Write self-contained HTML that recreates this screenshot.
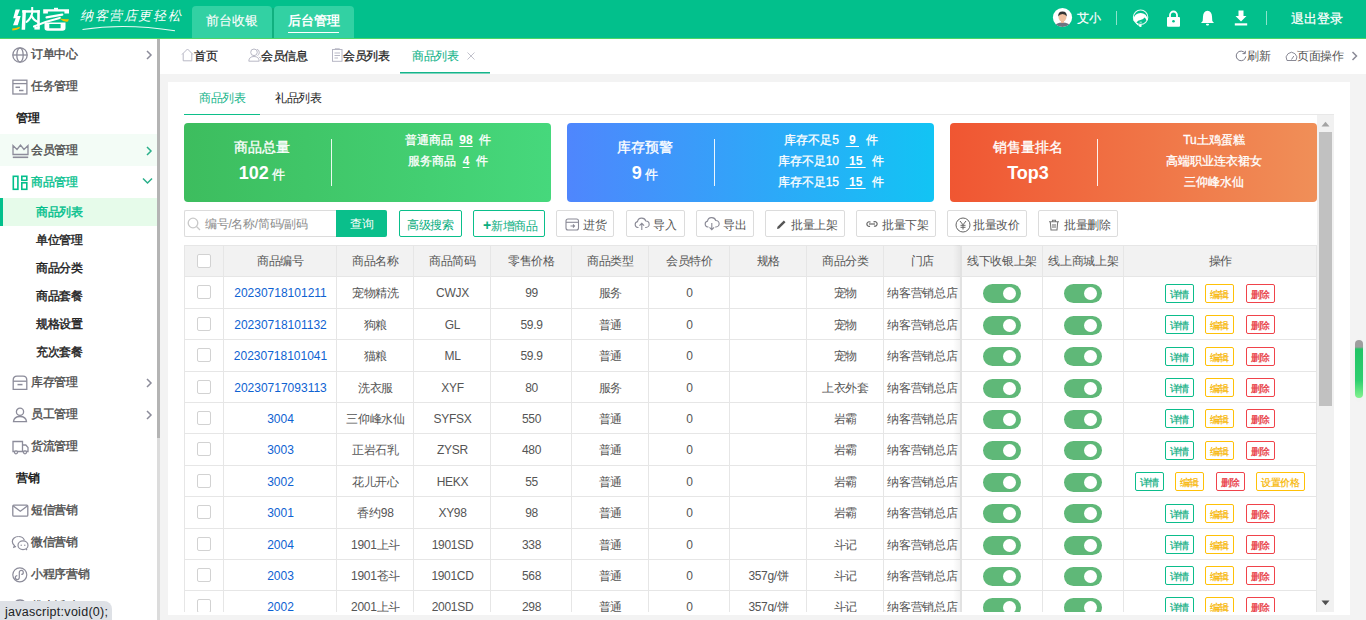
<!DOCTYPE html>
<html><head><meta charset="utf-8">
<style>
*{box-sizing:border-box;margin:0;padding:0}
html,body{width:1366px;height:620px;overflow:hidden}
body{position:relative;background:#f3f3f3;font-family:"Liberation Sans",sans-serif;font-size:12px;color:#333}
.a{position:absolute}
.hdr{left:0;top:0;width:1366px;height:38px;background:#02c08c}
.hline{left:0;top:38px;width:1366px;height:1px;background:#4dd568}
.side{left:0;top:39px;width:157px;height:581px;background:#fff}
.sbar{left:157px;top:39px;width:3px;height:581px;background:linear-gradient(180deg,#b4b4b4 0,#b4b4b4 399px,#dcdcdc 399px)}
.tabs{left:160px;top:39px;width:1206px;height:35px;background:#fff}
.panel{left:168px;top:82px;width:1182px;height:533px;background:#fff}
.t{white-space:nowrap;line-height:1}
.tb{font-size:12px;color:#222;letter-spacing:-0.3px;-webkit-text-stroke-width:0.25px}
.tb2{font-size:12px;color:#555;letter-spacing:-0.3px}
.card{top:123px;width:367px;height:79px;border-radius:4px}
.cdiv{top:139px;width:1px;height:47px;background:rgba(255,255,255,.9)}
.ctit{top:140px;width:156px;text-align:center;font-size:14px;color:#fff;-webkit-text-stroke-width:0.3px}
.cnum{top:164px;width:156px;text-align:center;font-size:13px;color:#fff;-webkit-text-stroke-width:0.3px}
.cnum b{font-size:18px;-webkit-text-stroke-width:0}
.cline{width:220px;text-align:center;font-size:12px;color:#fff;-webkit-text-stroke-width:0.3px}
.cline u{font-weight:bold;text-underline-offset:2px;-webkit-text-stroke-width:0}
.btn{top:210px;height:27px;border:1px solid #dcdcdc;border-radius:2px;background:#fff;font-size:12px;color:#555;text-align:center;line-height:28px;white-space:nowrap;letter-spacing:-0.3px}
.btn.g{border-color:#0abf8b;color:#0aae80}
.hl{left:0;width:1132px;height:1px;background:#e6e6e6}
.vl{top:130px;width:1px;height:400px;background:#e6e6e6}
.th{text-align:center;font-size:12px;color:#555;letter-spacing:-0.3px}
.td{text-align:center;font-size:12px;color:#555;letter-spacing:-0.3px}
.td.lk{color:#0e62d2;letter-spacing:0}
.cb{width:14px;height:14px;border:1px solid #d2d2d2;border-radius:2px;background:#fff}
.sw{width:38px;height:19px;border-radius:10px;background:#5fb878}
.sw:after{content:"";position:absolute;left:20px;top:3px;width:13px;height:13px;border-radius:50%;background:#fff}
.ab{width:29px;height:19px;border:1px solid;border-radius:2px;font-size:10px;text-align:center;line-height:19px;white-space:nowrap;letter-spacing:-0.3px}
.ab.w{width:49px}
.ab{-webkit-text-stroke-width:0.2px}
.bg{border-color:#0bbd8b;color:#0bad80}
.by{border-color:#ffc107;color:#f7b500}
.br{border-color:#f0434a;color:#e8303a}
.side-t{font-size:12px;color:#4c4c4c;letter-spacing:-0.3px;-webkit-text-stroke-width:0.35px}
.side-s{font-size:12px;color:#222;letter-spacing:-0.3px;-webkit-text-stroke-width:0.4px}
</style></head><body>
<div class="a hdr"></div>
<div class="a hline"></div>

<!-- HEADER -->
<svg class="a" style="left:0;top:0" width="75" height="38" viewBox="0 0 75 38">
<g fill="#fff">
<path d="M15.6 9.5H19.9L17.4 16H20.7L17.7 25.2H13L15.7 18.2H13.2Z"/>
<path d="M22.6 10.3H26L25.1 29.7H21.6Z"/>
<rect x="22.2" y="10.2" width="17.6" height="2.5"/>
<rect x="31.2" y="7" width="2" height="4"/>
<rect x="37.2" y="10.2" width="2.6" height="17.5"/>
<rect x="34.4" y="27" width="5.4" height="2.6"/>
<path d="M43.2 9.3H69V13.6H64.4V11.6H47.9V13.6H43.2Z"/>
<rect x="54" y="7.8" width="4" height="2"/>
<path fill-rule="evenodd" d="M44.5 22.4H65.5V28Q65.5 30.7 62.5 30.7H47.5Q44.5 30.7 44.5 28Z M49.3 24H60.6V28.2H49.3Z"/>
</g>
<g stroke="#fff" fill="none" stroke-linecap="round">
<path d="M32.3 12.5Q31.2 18.5 26.5 22" stroke-width="2"/>
<path d="M31.5 16Q34 20.5 37.5 21.8" stroke-width="2.2"/>
<path d="M46.5 17.3L62.3 14.6" stroke-width="2.2"/>
<path d="M34 26.5Q47 20.8 59.8 17.9" stroke-width="2.1"/>
</g>
<path d="M12.3 28.4Q16 28.4 19.9 26.7L19.5 28.4Q16 30.2 12.3 30.4Z" fill="#f5c000"/>
<path d="M59.3 18.2Q62.5 19.2 65.8 19.3L68.9 19.2L68 21.6Q63.5 22.4 59.3 18.2Z" fill="#f5c000"/>
</svg>
<div class="a t" style="left:80px;top:9px;font-size:13px;color:#fff;font-style:italic;letter-spacing:1.6px;font-family:'Liberation Serif',serif">纳客营店更轻松</div>
<svg class="a" style="left:80px;top:20px" width="100" height="12" viewBox="0 0 100 12"><path d="M2.5 9.5 Q45 3 95 10.8" stroke="#fff" stroke-width="1.1" fill="none" opacity=".9"/></svg>
<div class="a" style="left:192px;top:6px;width:80px;height:32px;background:#32d1a3;border-radius:4px 4px 0 0"></div>
<div class="a" style="left:274px;top:6px;width:80px;height:32px;background:#32d1a3;border-radius:4px 4px 0 0"></div>
<div class="a" style="left:272px;top:8px;width:2px;height:30px;background:#10b07f"></div>
<div class="a t" style="left:192px;top:14px;width:80px;text-align:center;font-size:13px;color:#fff;-webkit-text-stroke:0.1px #fff">前台收银</div>
<div class="a t" style="left:274px;top:14px;width:80px;text-align:center;font-size:13px;color:#fff;font-weight:bold">后台管理</div>
<div class="a" style="left:288px;top:32px;width:51px;height:1px;background:#fff"></div>

<svg class="a" style="left:1052px;top:7px" width="21" height="21" viewBox="0 0 21 21"><defs><clipPath id="av"><circle cx="10.5" cy="10.5" r="9.6"/></clipPath></defs><circle cx="10.5" cy="10.5" r="9.6" fill="#fff"/><g clip-path="url(#av)"><ellipse cx="10.5" cy="20" rx="8" ry="4.5" fill="#6f7380"/><rect x="9" y="13" width="3" height="3" fill="#e8b596"/><ellipse cx="10.5" cy="10" rx="4" ry="4.6" fill="#f0c0a0"/><path d="M6.2 9.5 Q6 4.5 10.5 4.6 Q15 4.5 14.8 9.5 Q13.5 7 10.5 7 Q7.5 7 6.2 9.5Z" fill="#333"/></g></svg>
<div class="a t" style="left:1077px;top:12px;font-size:12px;color:#fff;-webkit-text-stroke:0.2px #fff">艾小</div>
<div class="a" style="left:1116px;top:11px;width:1px;height:14px;background:rgba(255,255,255,.55)"></div>
<svg class="a" style="left:1132px;top:8px" width="18" height="20" viewBox="0 0 18 20"><circle cx="8.6" cy="9.2" r="7.2" stroke="#fff" stroke-width="1.1" fill="none" opacity=".9"/><path d="M1.4 12.5Q1.5 6.8 6 5.4Q10.5 4.4 13.5 6.7Q15.5 8.7 15.8 12L14.6 12.6Q13.6 10.3 12.4 9.6Q11.8 11.6 8.5 11.9Q5.5 12.1 4.8 14.2Q2.8 14.1 1.4 12.5Z" fill="#fff"/><path d="M4.2 14.8Q6 18 8.6 17.8" stroke="#fff" stroke-width="1.1" fill="none"/><circle cx="8.4" cy="17.8" r="1.3" fill="#fff"/><path d="M7.6 14.2H9.8" stroke="#fff" stroke-width=".9" opacity=".8"/></svg>
<svg class="a" style="left:1166px;top:10px" width="15" height="17" viewBox="0 0 15 17"><path d="M4 7.5 V5 A3.5 3.5 0 0 1 11 5 V7.5" stroke="#fff" stroke-width="1.8" fill="none"/><rect x="1" y="7" width="13" height="9.7" rx="1" fill="#fff"/><circle cx="7.5" cy="11.3" r="1.3" fill="#02c08c"/></svg>
<svg class="a" style="left:1200px;top:10px" width="15" height="16" viewBox="0 0 15 16"><path d="M7.5 0.8 Q11.8 1.5 12 6.5 L12.3 11 L14 13 H1 L2.7 11 L3 6.5 Q3.2 1.5 7.5 0.8Z" fill="#fff"/><rect x="6" y="13.8" width="3" height="1.6" rx=".8" fill="#fff"/></svg>
<svg class="a" style="left:1234px;top:10px" width="14" height="16" viewBox="0 0 14 16"><path d="M4.5 0.5 H9.5 V6 H12.5 L7 11.5 L1.5 6 H4.5Z" fill="#fff"/><rect x="0.8" y="13.3" width="12.4" height="2.2" fill="#fff"/></svg>
<div class="a" style="left:1266px;top:11px;width:1px;height:14px;background:rgba(255,255,255,.55)"></div>
<div class="a t" style="left:1291px;top:12px;font-size:13px;color:#fff;-webkit-text-stroke:0.25px #fff">退出登录</div>
<div class="a side"></div>

<!-- SIDEBAR -->
<div class="a" style="left:0;top:134px;width:157px;height:32px;background:#f3fcf6"></div>
<div class="a" style="left:0;top:198px;width:157px;height:28px;background:#e6fbea"></div>
<div class="a" style="left:0;top:198px;width:3px;height:28px;background:#02c08c"></div>
<svg class="a" style="left:12px;top:47px" width="16" height="16" viewBox="0 0 16 16" fill="none" stroke="#8c8c9a" stroke-width="1.3"><circle cx="8" cy="8" r="7.2"/><ellipse cx="8" cy="8" rx="3.2" ry="7.2"/><path d="M0.8 8H15.2"/></svg>
<div class="a t side-t" style="left:31px;top:48px">订单中心</div>
<svg class="a" style="left:145px;top:50px" width="8" height="10" viewBox="0 0 8 10"><path d="M2 1 L6 5 L2 9" stroke="#8c8c9a" stroke-width="1.5" fill="none"/></svg>
<svg class="a" style="left:12px;top:79px" width="16" height="16" viewBox="0 0 16 16" fill="none" stroke="#8c8c9a" stroke-width="1.3"><rect x="0.9" y="1.2" width="14" height="13.8"/><path d="M1 4.6H15"/><path d="M3.5 8.3H8" stroke-width="1.5"/><path d="M7 11.5H11.5" stroke-width="1.5"/></svg>
<div class="a t side-t" style="left:31px;top:80px">任务管理</div>
<div class="a t" style="left:16px;top:112px;font-weight:bold;color:#222">管理</div>
<svg class="a" style="left:12px;top:143px" width="17" height="16" viewBox="0 0 17 16" fill="none" stroke="#8c8c9a" stroke-width="1.3"><path d="M1 11.5V2.5L5 6.5L8.5 2L12 6.5L16 2.5V11.5Z"/><path d="M0.8 14.3H16.2" stroke-width="1.6"/></svg>
<div class="a t side-t" style="left:31px;top:144px">会员管理</div>
<svg class="a" style="left:145px;top:146px" width="8" height="10" viewBox="0 0 8 10"><path d="M2 1 L6 5 L2 9" stroke="#2aaf8a" stroke-width="1.5" fill="none"/></svg>
<svg class="a" style="left:12px;top:175px" width="16" height="16" viewBox="0 0 16 16" fill="none" stroke="#02bf8c" stroke-width="1.6"><rect x="1.3" y="1.3" width="4.6" height="13"/><rect x="9.8" y="1.3" width="5" height="4"/><rect x="9.8" y="7.8" width="5" height="6.5"/></svg>
<div class="a t side-t" style="left:31px;top:176px;color:#02bf8c">商品管理</div>
<svg class="a" style="left:142px;top:177px" width="11" height="8" viewBox="0 0 11 8"><path d="M1 1.5 L5.5 6 L10 1.5" stroke="#2aaf8a" stroke-width="1.5" fill="none"/></svg>
<div class="a t side-s" style="left:36px;top:206px;color:#02bf8c">商品列表</div>
<div class="a t side-s" style="left:36px;top:234px">单位管理</div>
<div class="a t side-s" style="left:36px;top:262px">商品分类</div>
<div class="a t side-s" style="left:36px;top:290px">商品套餐</div>
<div class="a t side-s" style="left:36px;top:318px">规格设置</div>
<div class="a t side-s" style="left:36px;top:346px">充次套餐</div>
<svg class="a" style="left:12px;top:375px" width="16" height="16" viewBox="0 0 16 16" fill="none" stroke="#8c8c9a" stroke-width="1.3"><path d="M1.2 14.4V5.2Q1.2 1.2 5 1.2H11Q14.8 1.2 14.8 5.2V14.4Z"/><path d="M1.2 6.2H14.8"/><path d="M5.5 9.6H10.5" stroke-width="1.5"/></svg>
<div class="a t side-t" style="left:31px;top:376px">库存管理</div>
<svg class="a" style="left:145px;top:378px" width="8" height="10" viewBox="0 0 8 10"><path d="M2 1 L6 5 L2 9" stroke="#8c8c9a" stroke-width="1.5" fill="none"/></svg>
<svg class="a" style="left:12px;top:407px" width="16" height="16" viewBox="0 0 16 16" fill="none" stroke="#8c8c9a" stroke-width="1.3"><circle cx="8" cy="4.8" r="3.6"/><path d="M1.5 14.6Q2 9.5 8 9.5Q14 9.5 14.5 14.6Z"/></svg>
<div class="a t side-t" style="left:31px;top:408px">员工管理</div>
<svg class="a" style="left:145px;top:410px" width="8" height="10" viewBox="0 0 8 10"><path d="M2 1 L6 5 L2 9" stroke="#8c8c9a" stroke-width="1.5" fill="none"/></svg>
<svg class="a" style="left:12px;top:440px" width="17" height="15" viewBox="0 0 17 15" fill="none" stroke="#8c8c9a" stroke-width="1.3"><path d="M1 1.5H10.5V11.5H1Z"/><path d="M10.5 5H13.8L16 7.5V11.5H10.5"/><circle cx="4" cy="12.3" r="1.5" fill="#fff"/><circle cx="13" cy="12.3" r="1.5" fill="#fff"/></svg>
<div class="a t side-t" style="left:31px;top:440px">货流管理</div>
<div class="a t" style="left:16px;top:472px;font-weight:bold;color:#222">营销</div>
<svg class="a" style="left:12px;top:504px" width="17" height="13" viewBox="0 0 17 13" fill="none" stroke="#8c8c9a" stroke-width="1.3"><rect x="0.8" y="1.2" width="15" height="11" rx="1"/><path d="M1 1.8L8.3 7.3L15.6 1.8"/></svg>
<div class="a t side-t" style="left:31px;top:504px">短信营销</div>
<svg class="a" style="left:11px;top:535px" width="18" height="16" viewBox="0 0 18 16" fill="none" stroke="#8c8c9a" stroke-width="1.2"><path d="M7.5 1.5C4 1.5 1.3 3.8 1.3 6.6C1.3 8.2 2.1 9.5 3.4 10.4L2.8 12.3L5 11.4"/><path d="M7.5 1.5C10.2 1.5 12.5 3 13.4 5.2"/><ellipse cx="12" cy="10.3" rx="5" ry="4.4" fill="#fff"/><path d="M15 14L16 15"/><circle cx="10.2" cy="10.2" r=".7" fill="#8c8c9a" stroke="none"/><circle cx="13.8" cy="10.2" r=".7" fill="#8c8c9a" stroke="none"/></svg>
<div class="a t side-t" style="left:31px;top:536px">微信营销</div>
<svg class="a" style="left:12px;top:567px" width="16" height="16" viewBox="0 0 16 16" fill="none" stroke="#8c8c9a" stroke-width="1.2"><circle cx="7.8" cy="7.8" r="7"/><path d="M5.3 8.6A2 2 0 1 0 7.3 10.6V5.4A2 2 0 1 1 9.3 7.4"/></svg>
<div class="a t side-t" style="left:31px;top:568px">小程序营销</div>
<svg class="a" style="left:12px;top:599px" width="16" height="16" viewBox="0 0 16 16" fill="none" stroke="#8c8c9a" stroke-width="1.3"><circle cx="8" cy="8" r="7"/></svg>
<div class="a t side-t" style="left:31px;top:600px">优惠活动</div>
<div class="a" style="left:0;top:601px;width:112px;height:19px;background:#dee1e6;border-radius:0 8px 0 0"></div>
<div class="a t" style="left:5px;top:606px;font-size:12.5px;color:#202124;letter-spacing:0.28px">javascript:void(0);</div>
<div class="a sbar"></div>
<div class="a tabs"></div>
<div class="a panel"></div>

<!-- PANEL CONTENT -->
<div class="a t" style="left:199px;top:92px;font-size:12px;color:#14b48a;letter-spacing:-0.3px">商品列表</div>
<div class="a t" style="left:275px;top:92px;font-size:12px;color:#222;letter-spacing:-0.3px">礼品列表</div>
<div class="a" style="left:184px;top:114px;width:1150px;height:1px;background:#e8e8e8"></div>
<div class="a" style="left:184px;top:114px;width:76px;height:1px;background:#0cbf8a"></div>

<!-- CARDS -->
<div class="a card" style="left:184px;background:linear-gradient(90deg,#3dbd5e,#46d87c)"></div>
<div class="a card" style="left:567px;background:linear-gradient(90deg,#4f86fd,#12c4f4)"></div>
<div class="a card" style="left:950px;background:linear-gradient(90deg,#f05632,#f08f58)"></div>
<div class="a cdiv" style="left:331px"></div>
<div class="a cdiv" style="left:714px"></div>
<div class="a cdiv" style="left:1097px"></div>
<div class="a t ctit" style="left:184px">商品总量</div>
<div class="a t cnum" style="left:184px"><b>102</b> 件</div>
<div class="a t ctit" style="left:567px">库存预警</div>
<div class="a t cnum" style="left:567px"><b>9</b> 件</div>
<div class="a t ctit" style="left:950px">销售量排名</div>
<div class="a t cnum" style="left:950px"><b>Top3</b></div>
<div class="a t cline" style="left:338px;top:134px">普通商品 &nbsp;<u>98</u>&nbsp; 件</div>
<div class="a t cline" style="left:338px;top:155px">服务商品 &nbsp;<u>4</u>&nbsp; 件</div>
<div class="a t cline" style="left:721px;top:134px">库存不足5 &nbsp;<u>&nbsp;9&nbsp;</u>&nbsp; 件</div>
<div class="a t cline" style="left:721px;top:155px">库存不足10 &nbsp;<u>&nbsp;15&nbsp;</u>&nbsp; 件</div>
<div class="a t cline" style="left:721px;top:176px">库存不足15 &nbsp;<u>&nbsp;15&nbsp;</u>&nbsp; 件</div>
<div class="a t cline" style="left:1104px;top:134px">Tu土鸡蛋糕</div>
<div class="a t cline" style="left:1104px;top:155px">高端职业连衣裙女</div>
<div class="a t cline" style="left:1104px;top:176px">三仰峰水仙</div>

<!-- TOOLBAR -->
<div class="a" style="left:184px;top:210px;width:153px;height:27px;border:1px solid #dcdcdc;border-right:none;border-radius:2px 0 0 2px;background:#fff"></div>
<svg class="a" style="left:187px;top:217px" width="14" height="14" viewBox="0 0 14 14" fill="none" stroke="#c8c8c8" stroke-width="1.3"><circle cx="6" cy="6" r="4.8"/><path d="M9.5 9.5L13 13"/></svg>
<div class="a t" style="left:205px;top:218px;font-size:12px;color:#8c8c8c;letter-spacing:-0.3px">编号/名称/简码/副码</div>
<div class="a" style="left:336px;top:210px;width:51px;height:27px;background:#0abf8b;border-radius:0 2px 2px 0"></div>
<div class="a t" style="left:336px;top:218px;width:51px;text-align:center;font-size:12px;color:#fff">查询</div>
<div class="a btn g" style="left:399px;width:63px">高级搜索</div>
<div class="a btn g" style="left:473px;width:72px;padding-left:9px;text-align:left"><b style="font-size:14px;font-weight:900;position:relative;top:0px;margin-right:0px">+</b>新增商品</div>
<div class="a btn" style="left:556px;width:58px;padding-left:26px;text-align:left">进货</div>
<div class="a btn" style="left:626px;width:59px;padding-left:26px;text-align:left">导入</div>
<div class="a btn" style="left:696px;width:58px;padding-left:26px;text-align:left">导出</div>
<div class="a btn" style="left:765px;width:80px;padding-left:25px;text-align:left">批量上架</div>
<div class="a btn" style="left:856px;width:80px;padding-left:25px;text-align:left">批量下架</div>
<div class="a btn" style="left:947px;width:80px;padding-left:25px;text-align:left">批量改价</div>
<div class="a btn" style="left:1038px;width:80px;padding-left:25px;text-align:left">批量删除</div>
<svg class="a" style="left:565px;top:218px" width="15" height="13" viewBox="0 0 15 13" fill="none" stroke="#8a8a96" stroke-width="1.1"><rect x="1" y="1" width="12.5" height="11" rx="2"/><path d="M1 4.3H13.5"/><path d="M5.5 8H9.5M8 6.5L9.5 8L8 9.5"/></svg>
<svg class="a" style="left:634px;top:217px" width="16" height="14" viewBox="0 0 16 14" fill="none" stroke="#8a8a96" stroke-width="1.1"><path d="M4.5 10.5H3.8A3 3 0 0 1 3.5 4.6A4.3 4.3 0 0 1 11.8 4A3.2 3.2 0 0 1 12 10.5H11.2"/><path d="M7.8 13V6.5M5.5 8.6L7.8 6.3L10.1 8.6"/></svg>
<svg class="a" style="left:704px;top:217px" width="16" height="14" viewBox="0 0 16 14" fill="none" stroke="#8a8a96" stroke-width="1.1"><path d="M4.5 10H3.8A3 3 0 0 1 3.5 4.1A4.3 4.3 0 0 1 11.8 3.5A3.2 3.2 0 0 1 12 10H11.2"/><path d="M7.8 6V12.6M5.5 10.3L7.8 12.6L10.1 10.3"/></svg>
<svg class="a" style="left:776px;top:219px" width="11" height="11" viewBox="0 0 11 11"><path d="M1 10L1.5 7.8L7.8 1.5L9.5 3.2L3.2 9.5Z" fill="#555"/></svg>
<svg class="a" style="left:865px;top:219px" width="14" height="10" viewBox="0 0 14 10" fill="none" stroke="#666" stroke-width="1.2"><path d="M5.5 3.2A2.3 2.3 0 1 0 5 7.2M8.5 3A2.3 2.3 0 1 1 9 7"/><path d="M4 5H10"/></svg>
<svg class="a" style="left:955px;top:217px" width="16" height="16" viewBox="0 0 16 16" fill="none" stroke="#666" stroke-width="1"><circle cx="8" cy="8" r="7"/><path d="M5 4L8 7.8L11 4M8 7.8V12.5M5.5 8.3H10.5M5.5 10.3H10.5"/></svg>
<svg class="a" style="left:1048px;top:219px" width="12" height="12" viewBox="0 0 12 12" fill="none" stroke="#777" stroke-width="1.1"><path d="M1 2.8H11M4.5 2.8V1.2H7.5V2.8M2.3 2.8L3 11H9L9.7 2.8M5 5V9M7 5V9"/></svg>
<!-- TABLE -->
<div class="a" style="left:184px;top:115px;width:1133px;height:497px;overflow:hidden">
<div class="a" style="left:0;top:130px;width:1132px;height:31px;background:#f2f2f2"></div>
<div class="a hl" style="top:130px"></div>
<div class="a hl" style="top:161px"></div>
<div class="a hl" style="top:193px"></div>
<div class="a hl" style="top:224px"></div>
<div class="a hl" style="top:256px"></div>
<div class="a hl" style="top:287px"></div>
<div class="a hl" style="top:318px"></div>
<div class="a hl" style="top:350px"></div>
<div class="a hl" style="top:381px"></div>
<div class="a hl" style="top:413px"></div>
<div class="a hl" style="top:444px"></div>
<div class="a hl" style="top:475px"></div>
<div class="a vl" style="left:0px"></div>
<div class="a vl" style="left:39px"></div>
<div class="a vl" style="left:152px"></div>
<div class="a vl" style="left:229px"></div>
<div class="a vl" style="left:306px"></div>
<div class="a vl" style="left:387px"></div>
<div class="a vl" style="left:464px"></div>
<div class="a vl" style="left:545px"></div>
<div class="a vl" style="left:622px"></div>
<div class="a vl" style="left:699px"></div>
<div class="a vl" style="left:858px"></div>
<div class="a vl" style="left:939px"></div>
<div class="a vl" style="left:1132px"></div>
<div class="a t th" style="left:40px;top:140px;width:113px">商品编号</div>
<div class="a t th" style="left:153px;top:140px;width:77px">商品名称</div>
<div class="a t th" style="left:230px;top:140px;width:77px">商品简码</div>
<div class="a t th" style="left:307px;top:140px;width:81px">零售价格</div>
<div class="a t th" style="left:388px;top:140px;width:77px">商品类型</div>
<div class="a t th" style="left:465px;top:140px;width:81px">会员特价</div>
<div class="a t th" style="left:546px;top:140px;width:77px">规格</div>
<div class="a t th" style="left:623px;top:140px;width:77px">商品分类</div>
<div class="a t th" style="left:700px;top:140px;width:77px">门店</div>
<div class="a t th" style="left:777px;top:140px;width:82px">线下收银上架</div>
<div class="a t th" style="left:859px;top:140px;width:81px">线上商城上架</div>
<div class="a t th" style="left:940px;top:140px;width:193px">操作</div>
<div class="a cb" style="left:13px;top:139px"></div>
<div class="a cb" style="left:13px;top:170px"></div>
<div class="a t td lk" style="left:40px;top:172px;width:113px">20230718101211</div>
<div class="a t td" style="left:153px;top:172px;width:77px">宠物精洗</div>
<div class="a t td" style="left:230px;top:172px;width:77px">CWJX</div>
<div class="a t td" style="left:307px;top:172px;width:81px">99</div>
<div class="a t td" style="left:388px;top:172px;width:77px">服务</div>
<div class="a t td" style="left:465px;top:172px;width:81px">0</div>
<div class="a t td" style="left:623px;top:172px;width:77px">宠物</div>
<div class="a t td" style="left:700px;top:172px;width:77px">纳客营销总店</div>
<div class="a sw" style="left:799px;top:169px"></div>
<div class="a sw" style="left:880px;top:169px"></div>
<div class="a ab bg" style="left:981px;top:169px">详情</div>
<div class="a ab by" style="left:1021px;top:169px">编辑</div>
<div class="a ab br" style="left:1062px;top:169px">删除</div>
<div class="a cb" style="left:13px;top:202px"></div>
<div class="a t td lk" style="left:40px;top:204px;width:113px">20230718101132</div>
<div class="a t td" style="left:153px;top:204px;width:77px">狗粮</div>
<div class="a t td" style="left:230px;top:204px;width:77px">GL</div>
<div class="a t td" style="left:307px;top:204px;width:81px">59.9</div>
<div class="a t td" style="left:388px;top:204px;width:77px">普通</div>
<div class="a t td" style="left:465px;top:204px;width:81px">0</div>
<div class="a t td" style="left:623px;top:204px;width:77px">宠物</div>
<div class="a t td" style="left:700px;top:204px;width:77px">纳客营销总店</div>
<div class="a sw" style="left:799px;top:201px"></div>
<div class="a sw" style="left:880px;top:201px"></div>
<div class="a ab bg" style="left:981px;top:200px">详情</div>
<div class="a ab by" style="left:1021px;top:200px">编辑</div>
<div class="a ab br" style="left:1062px;top:200px">删除</div>
<div class="a cb" style="left:13px;top:233px"></div>
<div class="a t td lk" style="left:40px;top:235px;width:113px">20230718101041</div>
<div class="a t td" style="left:153px;top:235px;width:77px">猫粮</div>
<div class="a t td" style="left:230px;top:235px;width:77px">ML</div>
<div class="a t td" style="left:307px;top:235px;width:81px">59.9</div>
<div class="a t td" style="left:388px;top:235px;width:77px">普通</div>
<div class="a t td" style="left:465px;top:235px;width:81px">0</div>
<div class="a t td" style="left:623px;top:235px;width:77px">宠物</div>
<div class="a t td" style="left:700px;top:235px;width:77px">纳客营销总店</div>
<div class="a sw" style="left:799px;top:232px"></div>
<div class="a sw" style="left:880px;top:232px"></div>
<div class="a ab bg" style="left:981px;top:232px">详情</div>
<div class="a ab by" style="left:1021px;top:232px">编辑</div>
<div class="a ab br" style="left:1062px;top:232px">删除</div>
<div class="a cb" style="left:13px;top:265px"></div>
<div class="a t td lk" style="left:40px;top:267px;width:113px">20230717093113</div>
<div class="a t td" style="left:153px;top:267px;width:77px">洗衣服</div>
<div class="a t td" style="left:230px;top:267px;width:77px">XYF</div>
<div class="a t td" style="left:307px;top:267px;width:81px">80</div>
<div class="a t td" style="left:388px;top:267px;width:77px">服务</div>
<div class="a t td" style="left:465px;top:267px;width:81px">0</div>
<div class="a t td" style="left:623px;top:267px;width:77px">上衣外套</div>
<div class="a t td" style="left:700px;top:267px;width:77px">纳客营销总店</div>
<div class="a sw" style="left:799px;top:264px"></div>
<div class="a sw" style="left:880px;top:264px"></div>
<div class="a ab bg" style="left:981px;top:263px">详情</div>
<div class="a ab by" style="left:1021px;top:263px">编辑</div>
<div class="a ab br" style="left:1062px;top:263px">删除</div>
<div class="a cb" style="left:13px;top:296px"></div>
<div class="a t td lk" style="left:40px;top:298px;width:113px">3004</div>
<div class="a t td" style="left:153px;top:298px;width:77px">三仰峰水仙</div>
<div class="a t td" style="left:230px;top:298px;width:77px">SYFSX</div>
<div class="a t td" style="left:307px;top:298px;width:81px">550</div>
<div class="a t td" style="left:388px;top:298px;width:77px">普通</div>
<div class="a t td" style="left:465px;top:298px;width:81px">0</div>
<div class="a t td" style="left:623px;top:298px;width:77px">岩霸</div>
<div class="a t td" style="left:700px;top:298px;width:77px">纳客营销总店</div>
<div class="a sw" style="left:799px;top:295px"></div>
<div class="a sw" style="left:880px;top:295px"></div>
<div class="a ab bg" style="left:981px;top:294px">详情</div>
<div class="a ab by" style="left:1021px;top:294px">编辑</div>
<div class="a ab br" style="left:1062px;top:294px">删除</div>
<div class="a cb" style="left:13px;top:327px"></div>
<div class="a t td lk" style="left:40px;top:329px;width:113px">3003</div>
<div class="a t td" style="left:153px;top:329px;width:77px">正岩石乳</div>
<div class="a t td" style="left:230px;top:329px;width:77px">ZYSR</div>
<div class="a t td" style="left:307px;top:329px;width:81px">480</div>
<div class="a t td" style="left:388px;top:329px;width:77px">普通</div>
<div class="a t td" style="left:465px;top:329px;width:81px">0</div>
<div class="a t td" style="left:623px;top:329px;width:77px">岩霸</div>
<div class="a t td" style="left:700px;top:329px;width:77px">纳客营销总店</div>
<div class="a sw" style="left:799px;top:326px"></div>
<div class="a sw" style="left:880px;top:326px"></div>
<div class="a ab bg" style="left:981px;top:326px">详情</div>
<div class="a ab by" style="left:1021px;top:326px">编辑</div>
<div class="a ab br" style="left:1062px;top:326px">删除</div>
<div class="a cb" style="left:13px;top:359px"></div>
<div class="a t td lk" style="left:40px;top:361px;width:113px">3002</div>
<div class="a t td" style="left:153px;top:361px;width:77px">花儿开心</div>
<div class="a t td" style="left:230px;top:361px;width:77px">HEKX</div>
<div class="a t td" style="left:307px;top:361px;width:81px">55</div>
<div class="a t td" style="left:388px;top:361px;width:77px">普通</div>
<div class="a t td" style="left:465px;top:361px;width:81px">0</div>
<div class="a t td" style="left:623px;top:361px;width:77px">岩霸</div>
<div class="a t td" style="left:700px;top:361px;width:77px">纳客营销总店</div>
<div class="a sw" style="left:799px;top:358px"></div>
<div class="a sw" style="left:880px;top:358px"></div>
<div class="a ab bg" style="left:951px;top:357px">详情</div>
<div class="a ab by" style="left:991px;top:357px">编辑</div>
<div class="a ab br" style="left:1032px;top:357px">删除</div>
<div class="a ab by w" style="left:1072px;top:357px">设置价格</div>
<div class="a cb" style="left:13px;top:390px"></div>
<div class="a t td lk" style="left:40px;top:392px;width:113px">3001</div>
<div class="a t td" style="left:153px;top:392px;width:77px">香约98</div>
<div class="a t td" style="left:230px;top:392px;width:77px">XY98</div>
<div class="a t td" style="left:307px;top:392px;width:81px">98</div>
<div class="a t td" style="left:388px;top:392px;width:77px">普通</div>
<div class="a t td" style="left:465px;top:392px;width:81px">0</div>
<div class="a t td" style="left:623px;top:392px;width:77px">岩霸</div>
<div class="a t td" style="left:700px;top:392px;width:77px">纳客营销总店</div>
<div class="a sw" style="left:799px;top:389px"></div>
<div class="a sw" style="left:880px;top:389px"></div>
<div class="a ab bg" style="left:981px;top:389px">详情</div>
<div class="a ab by" style="left:1021px;top:389px">编辑</div>
<div class="a ab br" style="left:1062px;top:389px">删除</div>
<div class="a cb" style="left:13px;top:422px"></div>
<div class="a t td lk" style="left:40px;top:424px;width:113px">2004</div>
<div class="a t td" style="left:153px;top:424px;width:77px">1901上斗</div>
<div class="a t td" style="left:230px;top:424px;width:77px">1901SD</div>
<div class="a t td" style="left:307px;top:424px;width:81px">338</div>
<div class="a t td" style="left:388px;top:424px;width:77px">普通</div>
<div class="a t td" style="left:465px;top:424px;width:81px">0</div>
<div class="a t td" style="left:623px;top:424px;width:77px">斗记</div>
<div class="a t td" style="left:700px;top:424px;width:77px">纳客营销总店</div>
<div class="a sw" style="left:799px;top:421px"></div>
<div class="a sw" style="left:880px;top:421px"></div>
<div class="a ab bg" style="left:981px;top:420px">详情</div>
<div class="a ab by" style="left:1021px;top:420px">编辑</div>
<div class="a ab br" style="left:1062px;top:420px">删除</div>
<div class="a cb" style="left:13px;top:453px"></div>
<div class="a t td lk" style="left:40px;top:455px;width:113px">2003</div>
<div class="a t td" style="left:153px;top:455px;width:77px">1901苍斗</div>
<div class="a t td" style="left:230px;top:455px;width:77px">1901CD</div>
<div class="a t td" style="left:307px;top:455px;width:81px">568</div>
<div class="a t td" style="left:388px;top:455px;width:77px">普通</div>
<div class="a t td" style="left:465px;top:455px;width:81px">0</div>
<div class="a t td" style="left:546px;top:455px;width:77px">357g/饼</div>
<div class="a t td" style="left:623px;top:455px;width:77px">斗记</div>
<div class="a t td" style="left:700px;top:455px;width:77px">纳客营销总店</div>
<div class="a sw" style="left:799px;top:452px"></div>
<div class="a sw" style="left:880px;top:452px"></div>
<div class="a ab bg" style="left:981px;top:451px">详情</div>
<div class="a ab by" style="left:1021px;top:451px">编辑</div>
<div class="a ab br" style="left:1062px;top:451px">删除</div>
<div class="a cb" style="left:13px;top:484px"></div>
<div class="a t td lk" style="left:40px;top:486px;width:113px">2002</div>
<div class="a t td" style="left:153px;top:486px;width:77px">2001上斗</div>
<div class="a t td" style="left:230px;top:486px;width:77px">2001SD</div>
<div class="a t td" style="left:307px;top:486px;width:81px">298</div>
<div class="a t td" style="left:388px;top:486px;width:77px">普通</div>
<div class="a t td" style="left:465px;top:486px;width:81px">0</div>
<div class="a t td" style="left:546px;top:486px;width:77px">357g/饼</div>
<div class="a t td" style="left:623px;top:486px;width:77px">斗记</div>
<div class="a t td" style="left:700px;top:486px;width:77px">纳客营销总店</div>
<div class="a sw" style="left:799px;top:483px"></div>
<div class="a sw" style="left:880px;top:483px"></div>
<div class="a ab bg" style="left:981px;top:482px">详情</div>
<div class="a ab by" style="left:1021px;top:482px">编辑</div>
<div class="a ab br" style="left:1062px;top:482px">删除</div>
<div class="a" style="left:769px;top:130px;width:7px;height:400px;background:linear-gradient(90deg,rgba(0,0,0,0),rgba(0,0,0,.05))"></div>
<div class="a" style="left:776px;top:130px;width:2px;height:400px;background:#e2e2e2"></div>
</div>
<div class="a" style="left:1317px;top:115px;width:17px;height:497px;background:#f1f1f1"></div>
<div class="a" style="left:1319px;top:132px;width:13px;height:274px;background:#c1c1c1"></div>
<svg class="a" style="left:1321px;top:121px" width="9" height="6" viewBox="0 0 9 6"><path d="M0.5 5.5L4.5 0.8L8.5 5.5Z" fill="#a3a3a3"/></svg>
<svg class="a" style="left:1321px;top:600px" width="9" height="6" viewBox="0 0 9 6"><path d="M0.5 0.5L4.5 5.2L8.5 0.5Z" fill="#505050"/></svg>
<div class="a" style="left:1351px;top:336px;width:16px;height:68px;border-radius:8px;background:radial-gradient(ellipse at center,rgba(0,0,0,.05),rgba(0,0,0,0) 70%)"></div>
<div class="a" style="left:1355px;top:340px;width:8px;height:58px;border-radius:4px;background:linear-gradient(180deg,#9e9e9e 0,#9e9e9e 7px,#22c466 9px,#2ecf70 70%,#84f28f 100%)"></div>
<!-- /TABLE -->
<!-- TABBAR -->
<svg class="a" style="left:181px;top:48px" width="13" height="14" viewBox="0 0 13 14" fill="none" stroke="#b4b4c2" stroke-width="0.95"><path d="M1 6.5L6.5 1L12 6.5M2.2 5.5V12.8H10.8V5.5"/></svg>
<div class="a t tb" style="left:194px;top:50px">首页</div>
<svg class="a" style="left:248px;top:48px" width="14" height="14" viewBox="0 0 14 14" fill="none" stroke="#b4b4c2" stroke-width="0.95"><circle cx="6" cy="4.3" r="3.3"/><path d="M0.8 13.2Q1 8.5 6 8.5Q11 8.5 11.2 13.2Z"/><path d="M9 1.3Q11.5 2 11.3 4.8Q11 7 9.5 7.5M11 8.8Q13.2 10 13.2 13"/></svg>
<div class="a t tb" style="left:261px;top:50px">会员信息</div>
<svg class="a" style="left:331px;top:48px" width="12" height="14" viewBox="0 0 12 14" fill="none" stroke="#b4b4c2" stroke-width="0.95"><rect x="1.5" y="1.5" width="9.5" height="11.8"/><path d="M4 1.5V0.8H8.5V1.5M3.5 5H9M3.5 7.5H9M3.5 10H7"/></svg>
<div class="a t tb" style="left:343px;top:50px">会员列表</div>
<div class="a t tb" style="left:412px;top:50px;color:#14b48a;-webkit-text-stroke-width:0.1px">商品列表</div>
<svg class="a" style="left:466px;top:51px" width="10" height="10" viewBox="0 0 10 10" stroke="#c2c2cc" stroke-width="1"><path d="M1.5 1.5L8.5 8.5M8.5 1.5L1.5 8.5"/></svg>
<div class="a" style="left:400px;top:72px;width:90px;height:1px;background:#14b48a"></div><div class="a" style="left:400px;top:73px;width:90px;height:1px;background:rgba(20,180,138,.55)"></div>
<svg class="a" style="left:1235px;top:50px" width="12" height="12" viewBox="0 0 12 12" fill="none" stroke="#7a7a88" stroke-width="1"><path d="M10 3.2A4.8 4.8 0 1 0 10.8 6.5"/><path d="M10.3 0.8V3.6H7.5"/></svg>
<div class="a t tb2" style="left:1247px;top:50px">刷新</div>
<svg class="a" style="left:1285px;top:50px" width="13" height="12" viewBox="0 0 13 12" fill="none" stroke="#8a8a96" stroke-width="1"><path d="M2 10.5A5.3 5.3 0 1 1 11 10.5Z"/><path d="M6.5 9.5L8.8 6"/></svg>
<div class="a t tb2" style="left:1297px;top:50px">页面操作</div>
<svg class="a" style="left:1350px;top:51px" width="9" height="10" viewBox="0 0 9 10"><path d="M2.5 1L6.5 5L2.5 9" stroke="#8a8a96" stroke-width="1.5" fill="none"/></svg>

</body></html>
